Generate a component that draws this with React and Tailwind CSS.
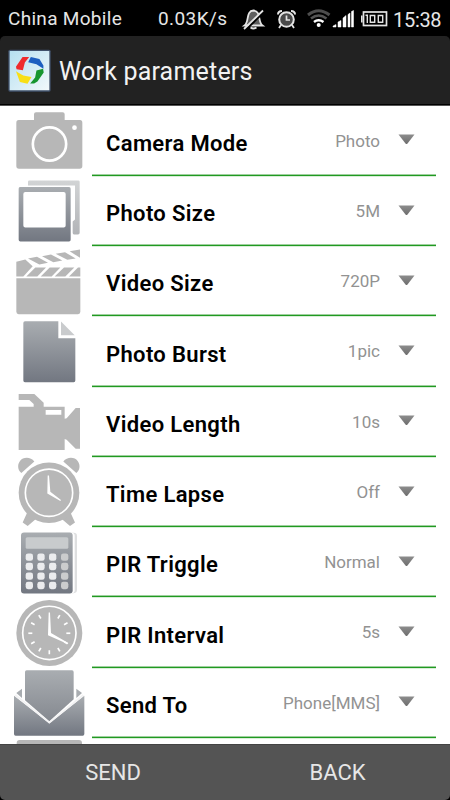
import React from 'react';

const GREY = '#b7b7b7';

function CameraIcon() {
  return (
    <svg viewBox="0 3 276 210.75" className="h-full w-full overflow-visible">
      <path
        d="M56 45 H102 V28 Q102 22 108 22 H188 Q194 22 194 28 V45 H240 Q247 45 247 53 V183 Q247 191 239 191 H57 Q49 191 49 183 V53 Q49 45 56 45 Z"
        fill={GREY}
      />
      <circle cx="148.500" cy="117" r="50" fill="none" stroke="#fff" strokeWidth="8" />
      <circle cx="223.500" cy="68" r="7" fill="#fff" />
    </svg>
  );
}

function PhotosIcon() {
  return (
    <svg viewBox="0 213.75 276 210.75" className="h-full w-full overflow-visible">
      <path d="M88 227 H235 Q239 227 239 231 V384 Q239 389 234 389 H222 Q218 389 218 384 V350 L225 344 V242 H84 V231 Q84 227 88 227 Z" fill="url(#backFrame)" />
      <path
        fillRule="evenodd"
        d="M60 247 H207 Q212 247 212 252 V405 Q212 410 207 410 H61 Q56 410 56 405 V252 Q56 247 60 247 Z M76 262 Q70 262 70 268 V362 Q70 368 76 368 H191 Q197 368 197 362 V268 Q197 262 191 262 Z"
        fill="url(#steel)"
      />
    </svg>
  );
}

function ClapperIcon() {
  return (
    <svg viewBox="0 4.5 276 210.75" className="h-full w-full overflow-visible" fill={GREY}>
      <path d="M49 98 H241 V199 Q241 206 234 206 H56 Q49 206 49 199 Z" />
      <path d="M49 49 L76 42 L98 62 L70 93 H49 Z" />
      <path d="M84 39 L111 34 L144 52 L118 57 Z" />
      <path d="M126 32 L153 27 L187 45 L160 50 Z" />
      <path d="M167 25 L195 20 L227 39 L202 43 Z" />
      <path d="M209 17 L240 12 V37 Z" />
      <path d="M106 66 H138 L112 93 H79 Z" />
      <path d="M149 66 H181 L155 93 H122 Z" />
      <path d="M192 66 H223 L196 93 H164 Z" />
      <path d="M234 66 H241 V93 H207 Z" />
    </svg>
  );
}

function FileIcon() {
  return (
    <svg viewBox="0 215.25 276 210.75" className="h-full w-full overflow-visible">
      <path d="M75 228 H175 V279 H226 V406 Q226 411 221 411 H75 Q70 411 70 406 V233 Q70 228 75 228 Z" fill="url(#steel)" />
      <path d="M183 229 L224 270 H183 Z" fill="#c9cbcd" />
    </svg>
  );
}

function CamcorderIcon() {
  return (
    <svg viewBox="0 6 276 210.75" className="h-full w-full overflow-visible">
      <path
        fillRule="evenodd"
        d="M56 27 H103 L131 53 V65 H194 V101 L200 100 L227 69 H240 V191 H227 L200 164 L194 162 V195 H56 V65 H101 V57 L88 45 H56 Z M137 75 V89 H184 V75 Z"
        fill={GREY}
      />
    </svg>
  );
}

function AlarmIcon() {
  return (
    <svg viewBox="0 216.75 276 210.75" className="h-full w-full overflow-visible">
      <path
        d="M64 265 C51 253 53 238 60 229 C69 216 92 216 103 230 Z M229 265 C242 253 240 238 233 229 C224 216 201 216 190 230 Z M84 378 L68 413 L83 424 L112 399 Z M209 378 L225 413 L210 424 L181 399 Z"
        fill={GREY}
      />
      <circle cx="147" cy="324" r="91" fill={GREY} />
      <circle cx="147" cy="324" r="71" fill="none" stroke="#fff" strokeWidth="5" />
      <path d="M143 272 H147 L151 321 L183 346 L181 349 L142 326 Z" fill="#fff" />
    </svg>
  );
}

function CalculatorIcon() {
  const columns = [77, 112, 147, 183];
  const rows = [84, 112, 141, 169];
  return (
    <svg viewBox="0 7.5 276 210.75" className="h-full w-full overflow-visible">
      <rect x="160" y="22" width="71" height="181" rx="10" fill="#dedfe0" />
      <rect x="160" y="22" width="64" height="181" rx="9" fill="#fff" />
      <rect x="63" y="21" width="155" height="183" rx="9" fill="url(#steel)" />
      <rect x="77" y="35" width="128" height="35" rx="5" fill="#c8cbcd" />
      {rows.map((y) =>
        columns.map((x) => (
          <rect
            key={`${x}-${y}`}
            x={x}
            y={y}
            width="22"
            height="22"
            rx="7"
            fill={x === 183 ? '#cbcccd' : '#ebecee'}
          />
        ))
      )}
    </svg>
  );
}

function ClockIcon() {
  const ticks = [30, 60, 90, 120, 150, 180, 210, 240, 270, 300, 330];
  return (
    <svg viewBox="0 218.25 276 210.75" className="h-full w-full overflow-visible">
      <circle cx="148" cy="323" r="99" fill={GREY} />
      <circle cx="148" cy="323" r="80" fill="none" stroke="#fff" strokeWidth="5" />
      {ticks.map((deg) => (
        <path key={deg} d="M148 261 V273" stroke="#fff" strokeWidth="5" transform={`rotate(${deg} 148 324)`} />
      ))}
      <path d="M146 262 H150 L153 323 L205 353 L203 356 L144 330 Z" fill="#fff" />
    </svg>
  );
}

function EnvelopeIcon() {
  return (
    <svg viewBox="0 24 276 210.75" className="h-full w-full overflow-visible">
      <path d="M66 86 V114 L49 99 Z M229 86 V114 L246 99 Z" fill="#a9adb1" />
      <path d="M80 31 H216 Q221 31 221 36 V118 L148 184 L75 121 V36 Q75 31 80 31 Z" fill="url(#letter)" />
      <path d="M42 107 L148 190 L253 107 V222 Q253 227 248 227 H47 Q42 227 42 222 Z" fill="url(#steel)" />
      <path d="M46 105 L148 188 L250 105" fill="none" stroke="#f3f3f4" strokeWidth="5" />
    </svg>
  );
}

function NextIcon() {
  return (
    <svg viewBox="0 234.75 276 210.75" className="h-full w-full overflow-visible">
      <rect x="50" y="241" width="196" height="150" rx="9" fill={GREY} />
    </svg>
  );
}

const PARAMETERS = [
  { label: 'Camera Mode', value: 'Photo', Icon: CameraIcon },
  { label: 'Photo Size', value: '5M', Icon: PhotosIcon },
  { label: 'Video Size', value: '720P', Icon: ClapperIcon },
  { label: 'Photo Burst', value: '1pic', Icon: FileIcon },
  { label: 'Video Length', value: '10s', Icon: CamcorderIcon },
  { label: 'Time Lapse', value: 'Off', Icon: AlarmIcon },
  { label: 'PIR Triggle', value: 'Normal', Icon: CalculatorIcon },
  { label: 'PIR Interval', value: '5s', Icon: ClockIcon },
  { label: 'Send To', value: 'Phone[MMS]', Icon: EnvelopeIcon },
];

// Gradients shared by the row icons
function IconGradients() {
  return (
    <svg className="absolute h-0 w-0">
      <defs>
        <linearGradient id="steel" x1="0" y1="0" x2="0" y2="1">
          <stop offset="0" stopColor="#a9adb1" />
          <stop offset="1" stopColor="#727781" />
        </linearGradient>
        <linearGradient id="letter" x1="0" y1="0" x2="0" y2="1">
          <stop offset="0" stopColor="#a9adb1" />
          <stop offset="1" stopColor="#858990" />
        </linearGradient>
        <linearGradient id="backFrame" x1="0" y1="0" x2="0" y2="1">
          <stop offset="0" stopColor="#d2d4d5" />
          <stop offset="1" stopColor="#b2b4b7" />
        </linearGradient>
        <linearGradient id="arrow" x1="0" y1="0" x2="0" y2="1">
          <stop offset="0" stopColor="#8c8c8c" />
          <stop offset="1" stopColor="#6e6e6e" />
        </linearGradient>
      </defs>
    </svg>
  );
}

function StatusIcons() {
  return (
    <svg viewBox="240 0 150 36" className="h-9 w-[150px] shrink-0" fill="none" stroke="#e4e4e4">
      {/* muted bell */}
      <path d="M244.500 25.500 C249.500 22 245.500 11 253.500 10.500 C261.500 11 257.500 22 262.500 25.500 Z" fill="#5e5e5e" strokeWidth="1.800" />
      <path d="M250.500 27.500 Q253.500 29.500 256.500 27.500" strokeWidth="1.800" />
      <path d="M245.500 30 L264.500 11.500" stroke="#000" strokeWidth="2" />
      <path d="M244 29 L263 10.500" strokeWidth="1.800" />
      {/* alarm */}
      <circle cx="286.500" cy="19.500" r="7.300" fill="#4a4a4a" strokeWidth="2" />
      <path d="M286.500 15.500 V20 H290" strokeWidth="1.700" />
      <path d="M278 14.500 Q278 11 282 11 M295 14.500 Q295 11 291 11" strokeWidth="2" />
      <path d="M281 25 L279 28 M292 25 L294 28" strokeWidth="1.800" />
      {/* wifi */}
      <path d="M308 15 Q318.500 6.500 329.500 15" stroke="#4d4d4d" strokeWidth="3" />
      <path d="M311 18.500 Q318.500 12.500 326.500 18.500" stroke="#555" strokeWidth="2.500" />
      <path d="M314 22 Q318.500 18.500 323.500 22" stroke="#fff" strokeWidth="2.500" />
      <circle cx="318.700" cy="25" r="2" fill="#fff" stroke="none" />
      {/* signal */}
      <path
        d="M333 27 V26 L336 24.500 V27 Z M338 27 V22 L341 20.500 V27 Z M343 27 V18 L346 15.500 V27 Z M348 27 V14.500 L350 13 V27 Z M351.500 27 V11.500 L353.500 10.500 V27 Z"
        fill="#fff"
        stroke="#fff"
        strokeWidth="0.500"
      />
      {/* battery */}
      <rect x="363.500" y="12" width="23" height="13.500" strokeWidth="1.700" />
      <path d="M361.800 15.500 V22.500" strokeWidth="1.600" />
      <path d="M365.500 15.300 H367.300 V23 M370.300 15.500 H374.700 V22.200 H370.300 Z M378.300 15.500 H382.700 V22.200 H378.300 Z" strokeWidth="1.400" />
    </svg>
  );
}

function StatusBar() {
  return (
    <header className="flex h-9 shrink-0 items-center bg-black pl-2 text-[#e6e6e6]">
      <span className="w-[150px] whitespace-nowrap pt-0.5 text-[19px] tracking-[0.3px]">China Mobile</span>
      <span className="w-[82px] whitespace-nowrap pt-0.5 text-[19px] tracking-[0.4px]">0.03K/s</span>
      <StatusIcons />
      <span className="pl-[3px] pt-[3px] text-[20px] tracking-[-0.3px]">15:38</span>
    </header>
  );
}

function AppLogo() {
  return (
    <svg viewBox="24 147 130 130" className="h-[43px] w-[43px]">
      <defs>
        <linearGradient id="logoBg" x1="0" y1="0" x2="1" y2="1">
          <stop offset="0" stopColor="#b4dff0" />
          <stop offset="1" stopColor="#f3f9fb" />
        </linearGradient>
      </defs>
      <rect x="27" y="151" width="124" height="123" rx="3" fill="url(#logoBg)" stroke="#40516b" strokeWidth="4" />
      <path d="M68 171 H88 L75 188 L69 211 L50 208 L48 201 Z" fill="#ef2b2d" />
      <path d="M93 171 L119 177 L131 197 V207 L110 193 L85 187 Z" fill="#1d5fc0" />
      <path d="M110 212 L130 207 L132 218 L113 245 L103 251 H91 L106 233 Z" fill="#16962f" />
      <path d="M48 214 L70 227 L95 232 L83 252 L60 247 Z" fill="#f8df16" />
    </svg>
  );
}

function ParameterRow({ label, value, Icon }) {
  return (
    <div className="flex h-[70.25px] shrink-0">
      <div className="w-[92px] shrink-0">
        <Icon />
      </div>
      <div className="mr-3.5 flex flex-1 flex-col">
        <div className="flex flex-1 items-center pl-3.5 pr-[21px]">
          <span className="flex-1 whitespace-nowrap pt-[7px] text-[22px] font-semibold tracking-[0.35px] text-black">{label}</span>
          <span className="pt-[3px] text-[17px] text-[#929292]">{value}</span>
          <svg viewBox="0 0 17 11" className="ml-[18px] h-[11px] w-[17px]">
            <path d="M0.500 0.500 H16.500 L9.500 9.500 Q8.500 10.500 7.500 9.500 Z" fill="url(#arrow)" />
          </svg>
        </div>
        <div className="-mb-[0.73px] h-[3px] shrink-0 border-b border-t border-b-[#d9eed9] border-t-[#9fd09f] bg-[#219a21]" />
      </div>
    </div>
  );
}

export default function App() {
  return (
    <div className="flex h-[800px] w-[450px] flex-col overflow-hidden bg-black font-['Roboto',sans-serif]">
      <IconGradients />
      <StatusBar />
      <div className="flex h-[69px] shrink-0 items-center rounded-t-[5px] border-b border-black bg-[#222] pl-2 text-[#f2f2f2]">
        <AppLogo />
        <h1 className="pl-2 pt-1 text-[25px] tracking-[0.2px]">Work parameters</h1>
      </div>
      <main className="flex h-[639px] shrink-0 flex-col overflow-hidden border-t border-[#555] bg-white">
        {PARAMETERS.map((item) => (
          <ParameterRow key={item.label} {...item} />
        ))}
        <div className="h-[70.25px] w-[92px] shrink-0">
          <NextIcon />
        </div>
      </main>
      <footer className="grid flex-1 grid-cols-2 rounded-b-[5px] border-t border-[#444] bg-[#545454] text-[22px] text-[#e6e6e6]">
        <button className="pb-px pl-px pt-px">SEND</button>
        <button className="pb-px pt-px">BACK</button>
      </footer>
    </div>
  );
}
